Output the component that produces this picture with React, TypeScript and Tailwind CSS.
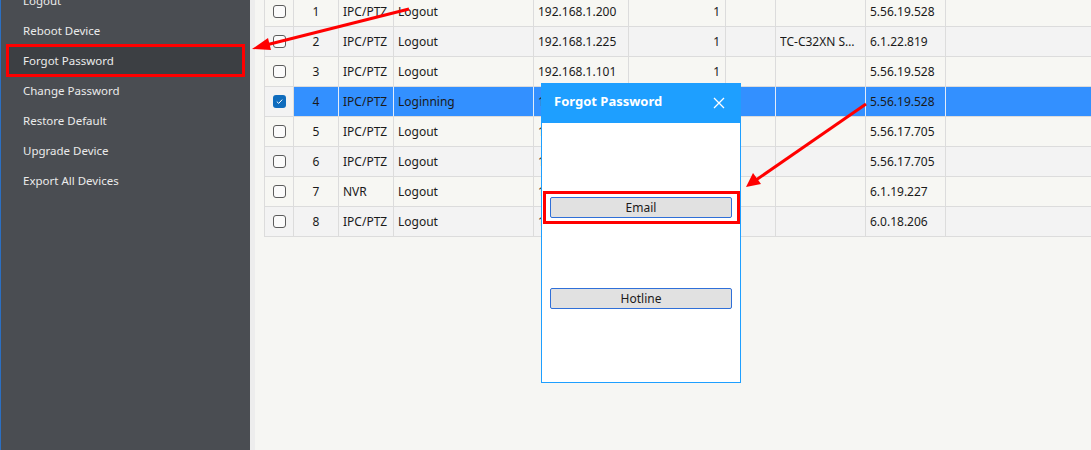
import React from "react";

const menu = [
  "Logout",
  "Reboot Device",
  "Forgot Password",
  "Change Password",
  "Restore Default",
  "Upgrade Device",
  "Export All Devices",
];

type Row = {
  no: number;
  type: string;
  status: string;
  ip: string;
  ch: string;
  model: string;
  ver: string;
  checked?: boolean;
};

const rows: Row[] = [
  { no: 1, type: "IPC/PTZ", status: "Logout", ip: "192.168.1.200", ch: "1", model: "", ver: "5.56.19.528" },
  { no: 2, type: "IPC/PTZ", status: "Logout", ip: "192.168.1.225", ch: "1", model: "TC-C32XN Spec", ver: "6.1.22.819" },
  { no: 3, type: "IPC/PTZ", status: "Logout", ip: "192.168.1.101", ch: "1", model: "", ver: "5.56.19.528" },
  { no: 4, type: "IPC/PTZ", status: "Loginning", ip: "192.168.1.102", ch: "1", model: "", ver: "5.56.19.528", checked: true },
  { no: 5, type: "IPC/PTZ", status: "Logout", ip: "192.168.1.103", ch: "1", model: "", ver: "5.56.17.705" },
  { no: 6, type: "IPC/PTZ", status: "Logout", ip: "192.168.1.104", ch: "1", model: "", ver: "5.56.17.705" },
  { no: 7, type: "NVR", status: "Logout", ip: "192.168.1.105", ch: "1", model: "", ver: "6.1.19.227" },
  { no: 8, type: "IPC/PTZ", status: "Logout", ip: "192.168.1.106", ch: "1", model: "", ver: "6.0.18.206" },
];

function Checkbox({ checked }: { checked?: boolean }) {
  if (checked) {
    return (
      <div className="w-[13px] h-[13px] rounded-[3px] bg-[#0f6cbd] flex items-center justify-center">
        <svg width="9" height="9" viewBox="0 0 9 9">
          <path d="M1.8 4.6 L3.7 6.4 L7.2 2.6" stroke="#fff" strokeWidth="1" fill="none" />
        </svg>
      </div>
    );
  }
  return <div className="w-[13px] h-[13px] rounded-[3px] border border-[#5c5c5c] bg-[#fbfbfb]" />;
}

export default function App() {
  const font = { fontFamily: '"Noto Sans", "Liberation Sans", sans-serif' };
  return (
    <div className="relative w-[1091px] h-[450px] overflow-hidden flex bg-[#f6f6f3]" style={font}>
      {/* Sidebar */}
      <aside className="w-[250px] h-full bg-[#4a4d52] border-l border-[#2b6fc2] shrink-0">
        <ul className="-mt-[14px] flex flex-col">
          {menu.map((m) => {
            const active = m === "Forgot Password";
            return (
              <li
                key={m}
                className={
                  "relative h-[30px] flex items-center text-[11.5px] text-[#ebebeb] " +
                  (active ? "mx-[5px] pl-[17px] bg-[#3c3f43]" : "pl-[22px]")
                }
              >
                {m}
                {active && (
                  <span className="absolute left-0 right-0 -top-[2px] -bottom-[1px] border-[3px] border-[#ff0000] pointer-events-none" />
                )}
              </li>
            );
          })}
        </ul>
      </aside>
      <div className="w-[5px] h-full bg-[#ededed] shrink-0" />

      {/* Main */}
      <main className="flex-1 pl-[9px]">
        <div className="-mt-[3px] border-l border-[#dcdcdc] text-[12px] text-[#1a1a1a]">
          {rows.map((r) => {
            const sel = !!r.checked;
            const rowBg = r.no % 2 === 0 ? "bg-[#f3f3f3]" : "bg-[#f7f7f3]";
            const cell = "h-full border-r border-[#dcdcdc] flex items-center overflow-hidden whitespace-nowrap";
            const cellSel = sel ? " bg-[#3390ff] border-[#e3ecf8]" : "";
            return (
              <div
                key={r.no}
                className={
                  "h-[30px] grid grid-cols-[29px_45px_55px_140px_95px_97px_50px_90px_80px_1fr] border-b border-[#dcdcdc] " +
                  rowBg
                }
              >
                <div className={cell + " justify-center"}>
                  <Checkbox checked={r.checked} />
                </div>
                <div className={cell + " justify-center" + cellSel}>{r.no}</div>
                <div className={cell + " pl-[4px]" + cellSel}>{r.type}</div>
                <div className={cell + " pl-[4px]" + cellSel}>{r.status}</div>
                <div className={cell + " pl-[4px]" + cellSel}>{r.ip}</div>
                <div className={cell + " justify-end pr-[5px]" + cellSel}>{r.ch}</div>
                <div className={cell + cellSel}></div>
                <div className={cell + " pl-[4px] pr-[6px]" + cellSel}>
                  <span className="block overflow-hidden text-ellipsis">{r.model}</span>
                </div>
                <div className={cell + " pl-[4px]" + cellSel}>{r.ver}</div>
                <div className={"h-full" + (sel ? " bg-[#3390ff]" : "")}></div>
              </div>
            );
          })}
        </div>
      </main>

      {/* Dialog */}
      <div className="absolute left-[541px] top-[83px] w-[200px] h-[300px] border border-[#1e9fff] bg-white flex flex-col">
        <div className="h-[40px] -mx-[1px] -mt-[1px] bg-[#1e9fff] flex items-center justify-between pl-[13px] pr-[16px] shrink-0">
          <span className="text-[13px] font-bold text-white -mt-[2px]">Forgot Password</span>
          <svg width="12" height="12" viewBox="0 0 12 12">
            <path d="M1 1 L11 11 M11 1 L1 11" stroke="#fff" strokeWidth="1.3" />
          </svg>
        </div>
        <div className="relative flex flex-col px-[8px] pt-[74px] gap-[70px]">
          <button className="h-[21px] w-full bg-[#e1e1e1] border border-[#2f6fd8] rounded-[2px] text-[12px] text-[#1a1a1a] flex items-center justify-center">
            Email
          </button>
          <button className="h-[21px] w-full bg-[#e1e1e1] border border-[#2f6fd8] rounded-[2px] text-[12px] text-[#1a1a1a] flex items-center justify-center">
            Hotline
          </button>
          <span className="absolute left-[1px] top-[68px] w-[197px] h-[33px] border-[3px] border-[#ff0000] pointer-events-none" />
        </div>
      </div>

      {/* Annotation arrows */}
      <svg className="absolute inset-0 pointer-events-none" width="1091" height="450" viewBox="0 0 1091 450">
        <line x1="409" y1="9" x2="266" y2="45" stroke="#ff0000" strokeWidth="3" />
        <polygon points="252,49 268,38 271,50" fill="#ff0000" />
        <line x1="866" y1="104" x2="756" y2="180" stroke="#ff0000" strokeWidth="3" />
        <polygon points="746,187 753,173 761,184" fill="#ff0000" />
      </svg>
    </div>
  );
}
